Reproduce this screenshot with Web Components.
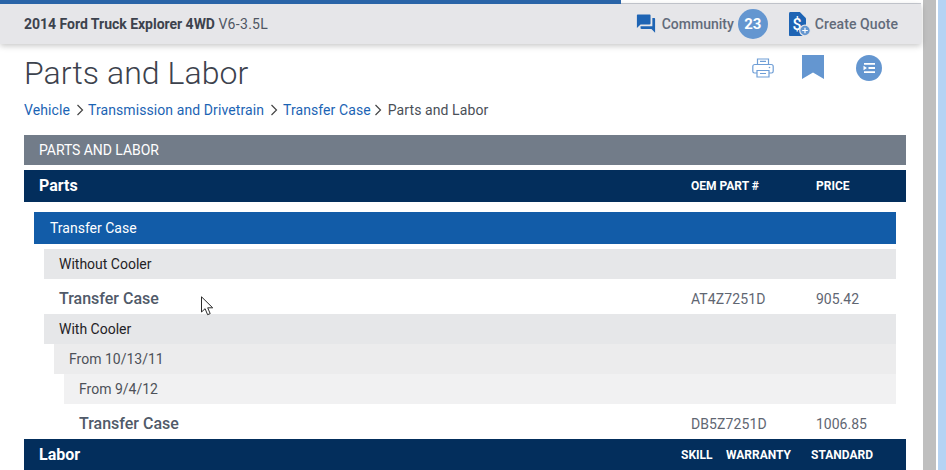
<!DOCTYPE html>
<html lang="en"><head><meta charset="utf-8"><title>Parts and Labor</title>
<style>
html,body{margin:0;padding:0;height:470px;overflow:hidden;background:#fff}
body{font-family:Roboto,"Liberation Sans",sans-serif}
</style></head><body>
<app-shell>
  <top-bar slot="top"></top-bar>
  <page-head title-text="Parts and Labor"></page-head>
  <crumb-trail></crumb-trail>
  <band-row kind="section" label="PARTS AND LABOR"></band-row>
  <band-row kind="head" label="Parts" cols="OEM PART #|PRICE"></band-row>
  <band-row kind="group" label="Transfer Case"></band-row>
  <band-row kind="l1" label="Without Cooler"></band-row>
  <part-row label="Transfer Case" part="AT4Z7251D" price="905.42" indent="35"></part-row>
  <band-row kind="l1" label="With Cooler"></band-row>
  <band-row kind="l2" label="From 10/13/11"></band-row>
  <band-row kind="l3" label="From 9/4/12"></band-row>
  <part-row label="Transfer Case" part="DB5Z7251D" price="1006.85" indent="55"></part-row>
  <band-row kind="labor" label="Labor" cols="SKILL|WARRANTY|STANDARD"></band-row>
</app-shell>
<script>
const def=(n,html)=>customElements.define(n,class extends HTMLElement{
  connectedCallback(){ if(this.shadowRoot) return; const s=this.attachShadow({mode:'open'}); s.innerHTML=typeof html==='function'?html(this):html; }
});
def('app-shell',`<style>
:host{display:flex;width:946px;height:470px;overflow:hidden;position:relative}
.main{width:923px;flex:none;display:flex;flex-direction:column;position:relative}
.content{padding:0 17px 0 24px;display:flex;flex-direction:column}
.track{width:13px;flex:none;background:#bfbfbf}
.gap{width:2px;flex:none;background:#fff}
.edge{flex:1;background:#b5d3f3}
svg{position:absolute;left:201px;top:296px}
</style>
<div class="main"><slot name="top"></slot><div class="content"><slot></slot></div>
<svg width="14" height="20" viewBox="0 0 14 20" aria-hidden="true"><path d="M.5.8V16l3.6-3.3 2.5 6 2.6-1.1-2.5-5.8h5z" fill="#fff" stroke="#2b2b2b" stroke-width="1"/></svg>
</div><div class="track"></div><div class="gap"></div><div class="edge"></div>`);
def('top-bar',`<style>
:host{display:block;position:relative;z-index:2}
.progress{height:4px;background:#fff;display:flex;box-sizing:border-box;border-bottom:1px solid #c9ccd3;margin-right:2px}
.progress i{display:block;width:621px;height:4px;background:#2a64a8}
.bar{height:40px;background:#e6e6e9;display:flex;align-items:center;padding:0 23px 0 24px;margin-right:2px;box-shadow:0 2px 6px rgba(0,0,0,.22);font-size:14px}
.veh{font-weight:700;color:#3c424d;letter-spacing:-.02px}
.veh span{font-weight:400;color:#4f5663;letter-spacing:.3px}
.right{margin-left:auto;display:flex;align-items:center;font-weight:500;color:#626b7a}
.c{margin:0 4px 0 6px}
.badge{width:30px;height:30px;border-radius:50%;background:#6496d0;color:#fff;font-weight:700;font-size:15px;display:flex;align-items:center;justify-content:center;margin-right:20px}
.q{margin-left:3px;letter-spacing:.08px}
svg{display:block;flex:none}
</style>
<div class="progress"><i></i></div>
<div class="bar"><div class="veh">2014 Ford Truck Explorer 4WD <span>V6-3.5L</span></div>
<div class="right">
<svg width="20" height="20" viewBox="1 2 22 21" style="margin-top:-1px" aria-hidden="true"><path fill="#1e64b4" d="M21 6h-2v9H6v2c0 .55.45 1 1 1h11l4 4V7c0-.55-.45-1-1-1zm-4 6V3c0-.55-.45-1-1-1H3c-.55 0-1 .45-1 1v14l4-4h10c.55 0 1-.45 1-1z"/></svg>
<span class="c">Community</span><span class="badge">23</span>
<svg width="24" height="25" viewBox="0 0 24 25" aria-hidden="true"><path fill="#1e64b4" d="M1 1.5C1 .7 1.6 0 2.4 0h9.4L18 6.2V23c0 .6-.5 1-1 1H2c-.6 0-1-.5-1-1z"/><text x="4.6" y="18" font-family="Roboto,sans-serif" font-size="16" font-weight="500" fill="#fff">$</text><circle cx="17" cy="18.5" r="5.3" fill="#6496d0" stroke="#e6e6e9" stroke-width="1.2"/><path d="M14.2 18.5h5.6M17 15.7v5.6" stroke="#fff" stroke-width="1.2"/></svg>
<span class="q">Create Quote</span></div></div>`);
def('page-head',h=>`<style>
:host{display:flex;height:50px;align-items:flex-start;position:relative}
h1{margin:0;font-weight:300;font-size:32px;line-height:37px;margin-top:11px;color:#3c424d;letter-spacing:.06px}
.ic{margin-left:auto;display:flex;align-items:center;margin-right:24px;margin-top:11px}
svg{display:block}
</style><h1>${h.getAttribute('title-text')}</h1>
<div class="ic">
<svg width="22" height="20" viewBox="0 0 22 20" style="margin-right:28px;margin-top:-1px" aria-hidden="true"><g fill="none" stroke="#6f9ed6" stroke-width="1.2"><path d="M5.500 6.500V1h11v5.500"/><path d="M5 15H2.500C1.400 15 .8 14.300.8 13.300V8.500c0-1.200.8-2 2-2h16.400c1.200 0 2 .8 2 2v4.800c0 1-.6 1.700-1.700 1.700H17"/><path d="M5 12.500h12V19H5z"/><path d="M8 3.300h6M8 15.500h6"/></g><circle cx="17.500" cy="9.500" r=".8" fill="#6f9ed6"/></svg>
<svg width="22" height="24" viewBox="0 0 22 24" style="margin-right:32px;margin-top:-2px" aria-hidden="true"><path fill="#6496d0" d="M0 0h22v24l-11-6.500L0 24z"/></svg>
<svg width="26" height="26" viewBox="0 0 26 26" aria-hidden="true"><circle cx="13" cy="13" r="13" fill="#6496d0"/><path fill="#fff" d="M8 8h11v1.800H8zM12.500 12.100H19v1.800h-6.500zM8 16.200h11V18H8zM7.500 10.800l3.500 2.200-3.500 2.200z"/></svg>
</div>`);
def('crumb-trail',`<style>
:host{display:flex;align-items:center;height:20px;margin-top:6px;margin-bottom:15px;font-size:14px;color:#1b64b4;letter-spacing:.09px}
svg{margin:0 4px 0 6px;display:block}
.last{color:#4a4f57;margin-left:3px}
</style>
<span>Vehicle</span><svg width="8" height="12" viewBox="0 0 8 12" aria-hidden="true"><path d="M1.500 1l5 5-5 5" fill="none" stroke="#444" stroke-width="1.200"/></svg>
<span>Transmission and Drivetrain</span><svg width="8" height="12" viewBox="0 0 8 12" style="margin-right:5px" aria-hidden="true"><path d="M1.500 1l5 5-5 5" fill="none" stroke="#444" stroke-width="1.200"/></svg>
<span>Transfer Case</span><svg width="8" height="12" viewBox="0 0 8 12" style="margin-left:3px;margin-right:3px" aria-hidden="true"><path d="M1.500 1l5 5-5 5" fill="none" stroke="#444" stroke-width="1.200"/></svg>
<span class="last">Parts and Labor</span>`);
const kinds={
 section:'height:30px;background:#727c89;color:#fff;padding-left:15px;font-size:14px;margin-bottom:5px;letter-spacing:-.06px',
 head:'height:32px;background:#032e5c;color:#fff;padding:0 0 1px 15px;font-size:16px;font-weight:700;margin-bottom:10px',
 group:'height:32px;background:#125ca8;color:#fff;padding-left:16px;margin:0 10px 5px;font-size:14px',
 l1:'height:30px;background:#e6e7e9;color:#1f2226;padding-left:15px;margin:0 10px 0 20px;font-size:14px',
 l2:'height:30px;background:#ececed;color:#4d5159;padding-left:15px;margin:0 10px 0 30px;font-size:14px',
 l3:'height:30px;background:#f1f1f2;color:#4d5159;padding-left:15px;margin:0 10px 0 40px;font-size:14px',
 labor:'height:31px;background:#032e5c;color:#fff;padding-left:15px;font-size:16px;font-weight:700'
};
def('band-row',h=>{
 const k=h.getAttribute('kind'); const cols=(h.getAttribute('cols')||'').split('|').filter(Boolean);
 let c='';
 if(k==='head') c=`<span class="c" style="left:667px">${cols[0]}</span><span class="c" style="left:792px">${cols[1]}</span>`;
 if(k==='labor') c=`<span class="c" style="left:657px">${cols[0]}</span><span class="c" style="left:702px">${cols[1]}</span><span class="c" style="left:787px">${cols[2]}</span>`;
 return `<style>:host{display:flex;align-items:center;position:relative;box-sizing:border-box;${kinds[k]}}
 .c{position:absolute;font-size:12px;font-weight:700;top:50%;transform:translateY(-50%);white-space:nowrap}</style><span>${h.getAttribute('label')}</span>${c}`;
});
def('part-row',h=>`<style>
:host{display:grid;grid-template-columns:667px 125px 1fr;height:35px;align-items:center;font-size:14px;color:#5f6672;padding-top:4px;box-sizing:border-box}
.n{font-size:16px;font-weight:500;color:#505a69;padding-left:${h.getAttribute('indent')}px}
.p{letter-spacing:.1px}
</style><span class="n">${h.getAttribute('label')}</span><span class="p">${h.getAttribute('part')}</span><span>${h.getAttribute('price')}</span>`);
</script>
</body></html>
